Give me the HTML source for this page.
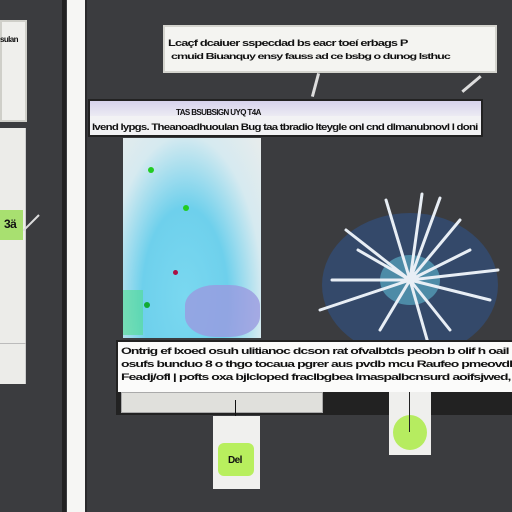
<!DOCTYPE html>
<html><head><style>
body{margin:0;width:512px;height:512px;background:#3b3c3f;position:relative;overflow:hidden;font-family:"Liberation Sans",sans-serif;}
div{position:absolute;box-sizing:border-box}
.t{font-size:9px;font-weight:bold;color:#111;white-space:nowrap;letter-spacing:-0.6px;line-height:12px;transform-origin:left center}
</style></head><body>
<div style="left:62px;top:0;width:4px;height:512px;background:#222"></div>
<div style="left:67px;top:0;width:18px;height:512px;background:#f6f6f4"></div>
<div style="left:85px;top:0;width:2px;height:512px;background:#2a2a2c"></div>
<div style="left:0;top:20px;width:27px;height:102px;background:#efefec;border:2px solid #cfcfc9"></div>
<div class="t" style="left:0;top:34px;font-size:8px">sulan</div>
<div style="left:0;top:128px;width:26px;height:256px;background:#ecece9;border-right:1px solid #ccc"></div>
<div style="left:0;top:210px;width:23px;height:30px;background:#a8e070"></div>
<div class="t" style="left:4px;top:218px;font-size:12px">3ä</div>
<div style="left:0;top:343px;width:26px;height:1px;background:#bbb"></div>
<div style="left:38px;top:215px;width:2px;height:22px;background:#ddd;transform:rotate(45deg);transform-origin:top"></div>
<div style="left:163px;top:25px;width:334px;height:48px;background:#f4f4f1;border:2px solid #d4d4ce"></div>
<div class="t" style="left:168px;top:37px;transform:scaleX(1.42)">Lcaçf dcaiuer sspecdad bs eacr toeí erbags P</div>
<div class="t" style="left:171px;top:51px;font-size:8px;transform:scaleX(1.56)">cmuid Biuanquy ensy fauss ad ce bsbg o dunog lsthuc</div>
<div style="left:314px;top:73px;width:3px;height:24px;background:#ddd;transform:rotate(15deg)"></div>
<div style="left:470px;top:72px;width:3px;height:24px;background:#ddd;transform:rotate(50deg)"></div>
<div style="left:88px;top:99px;width:395px;height:38px;background:#f2f2f4;border:2px solid #222"></div>
<div style="left:90px;top:101px;width:391px;height:15px;background:linear-gradient(#d6d2ec,#ecebf3)"></div>
<div class="t" style="left:176px;top:107px;font-size:8px">TAS BSUBSIGN UYQ T4A</div>
<div class="t" style="left:92px;top:121px;transform:scaleX(1.27)">lvend lypgs. Theanoadhuoulan Bug taa tbradio lteygle onl cnd dlmanubnovl l doni</div>
<div style="left:123px;top:138px;width:138px;height:200px;background:radial-gradient(ellipse at 45% 80%,#7ad8f0 0%,#6ed0ec 40%,#d6eaf0 72%,#e8ecec 100%)"></div>
<div style="left:185px;top:285px;width:75px;height:52px;border-radius:40%;background:#9a9ae0;opacity:.8"></div>
<div style="left:123px;top:290px;width:20px;height:45px;background:#52dc90;opacity:.6"></div>
<div style="left:148px;top:167px;width:6px;height:6px;border-radius:50%;background:#2c2"></div>
<div style="left:183px;top:205px;width:6px;height:6px;border-radius:50%;background:#2c2"></div>
<div style="left:144px;top:302px;width:6px;height:6px;border-radius:50%;background:#1a3"></div>
<div style="left:173px;top:270px;width:5px;height:5px;border-radius:50%;background:#a14"></div>
<svg style="position:absolute;left:310px;top:190px" width="200" height="150">
<ellipse cx="100" cy="95" rx="88" ry="72" fill="#34496a"/>
<ellipse cx="100" cy="90" rx="30" ry="25" fill="#5fb8d0" opacity=".6"/>
<g stroke="#e8eef5" stroke-width="3" stroke-linecap="round" fill="none">
<path d="M100 90 L36 40 M100 90 L48 60 M100 90 L22 90 M100 90 L10 120 M100 90 L76 10 M100 90 L112 4 M100 90 L130 8 M100 90 L150 30 M100 90 L188 80 M100 90 L180 110 M100 90 L140 140 M100 90 L70 140 M100 90 L120 160 M100 90 L160 60"/>
</g></svg>
<div style="left:116px;top:340px;width:400px;height:75px;background:#222"></div>
<div style="left:118px;top:342px;width:400px;height:50px;background:#fbfbfa"></div>
<div class="t" style="left:121px;top:345px;transform:scaleX(1.55)">Ontrig ef lxoed osuh ulitianoc dcson rat ofvalbtds peobn b olif h oail</div>
<div class="t" style="left:121px;top:358px;transform:scaleX(1.55)">osufs bunduo 8 o thgo tocaua pgrer aus pvdb mcu Raufeo pmeovdl Dt</div>
<div class="t" style="left:121px;top:371px;transform:scaleX(1.55)">Feadj/ofl | pofts oxa bjlcloped fraclbgbea lmaspalbcnsurd aoifsjwed, oo</div>
<div style="left:121px;top:392px;width:202px;height:21px;background:#e0e0dc;border:1px solid #aaa"></div>
<div style="left:235px;top:400px;width:1px;height:80px;background:#111"></div>
<div style="left:213px;top:416px;width:47px;height:73px;background:#f0f0ee"></div>
<div style="left:218px;top:443px;width:36px;height:33px;background:#b8ef5e;border-radius:6px"></div>
<div class="t" style="left:228px;top:455px;font-size:10px">Del</div>
<div style="left:389px;top:392px;width:42px;height:63px;background:#efefed"></div>
<div style="left:393px;top:415px;width:34px;height:35px;background:#b6ec60;border-radius:50%"></div>
<div style="left:409px;top:392px;width:1px;height:40px;background:#222"></div>
</body></html>
